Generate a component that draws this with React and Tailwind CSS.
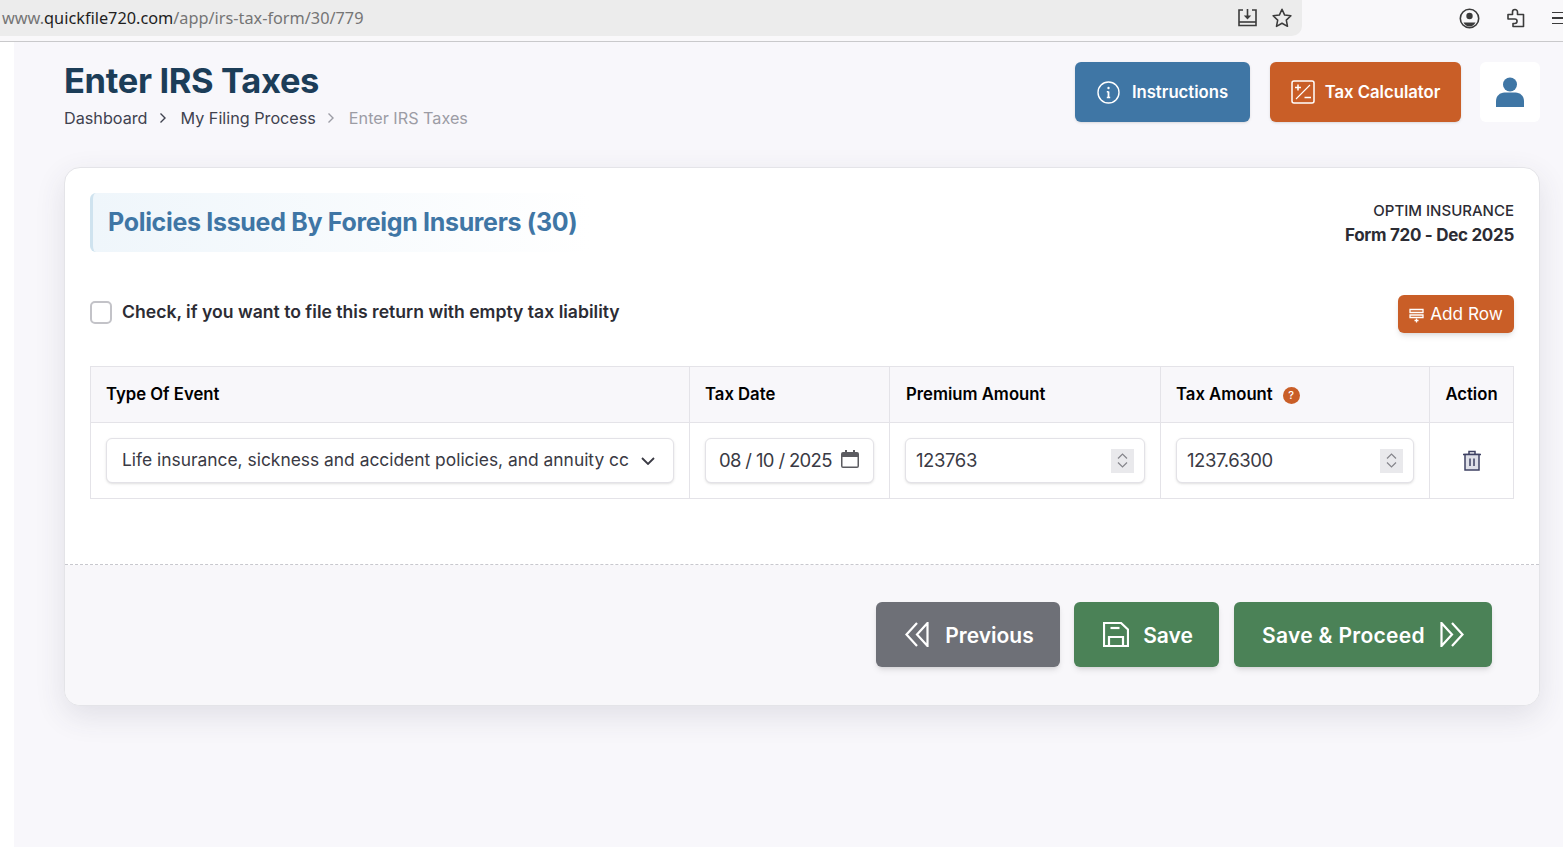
import React from "react";

const font = { fontFamily: "Inter, 'Liberation Sans', sans-serif" };

function Spinner() {
  return (
    <span className="flex h-[24px] w-[23px] flex-col items-center justify-center gap-[3px] bg-[#e9e9ec]">
      <svg width="11" height="6" viewBox="0 0 11 6" fill="none" stroke="#85858b" strokeWidth="1.2">
        <path d="M1 5.5 5.5 1 10 5.5" />
      </svg>
      <svg width="11" height="6" viewBox="0 0 11 6" fill="none" stroke="#85858b" strokeWidth="1.2">
        <path d="M1 .5 5.5 5 10 .5" />
      </svg>
    </span>
  );
}

function Crumb() {
  return (
    <svg width="8" height="12" viewBox="0 0 8 12" fill="none" stroke="currentColor" strokeWidth="1.4">
      <path d="M1.5 1.5 6 6l-4.5 4.500" />
    </svg>
  );
}

function BrowserBar() {
  return (
    <div className="flex h-[42px] items-start justify-between border-b border-[#c9c9cb] bg-[#f9f8fa]">
      <div className="flex h-[36px] w-[1302px] items-center justify-between rounded-br-[10px] bg-[#ececec] pl-[2px] pr-[9px]">
        <div className="text-[16.3px] text-[#757575]" style={{ fontFamily: "'Noto Sans', sans-serif" }}>
          www.<span className="text-[#1e1e1e]">quickfile720.com</span>/app/irs-tax-form/30/779
        </div>
        <div className="flex items-center gap-[13px] text-[#3b3b3b]">
          <svg width="21" height="20" viewBox="0 0 21 20" fill="none" stroke="currentColor" strokeWidth="1.6">
            <path d="M6 2H2v15.500h17V2h-4" />
            <path d="M2 14h17" />
            <path d="M10.500 1v9" />
            <path d="M6.800 7.500h7.400l-3.700 4z" fill="currentColor" stroke="none" />
          </svg>
          <svg width="22" height="22" viewBox="0 0 24 24" fill="none" stroke="currentColor" strokeWidth="1.700" strokeLinejoin="round">
            <path d="m12 2.500 2.900 6.300 6.800.8-5 4.700 1.300 6.800-6-3.400-6 3.400 1.300-6.800-5-4.700 6.800-.8z" />
          </svg>
        </div>
      </div>
      <div className="flex h-[36px] flex-1 items-center justify-end gap-[27px] text-[#3b3b3b]">
        <svg width="21" height="21" viewBox="0 0 21 21" fill="none" stroke="currentColor" strokeWidth="1.6">
          <circle cx="10.500" cy="10.500" r="9.200" />
          <circle cx="10.500" cy="8" r="3.200" fill="currentColor" stroke="none" />
          <path d="M4.500 14.500h12c-1.300 2.400-3.500 4-6 4s-4.700-1.600-6-4z" fill="currentColor" stroke="none" />
        </svg>
        <svg width="18" height="20" viewBox="0 0 18 20" fill="none" stroke="currentColor" strokeWidth="1.6" strokeLinejoin="round">
          <path d="M1 6.500h4.500V4a2.500 2.500 0 0 1 5 0v2.500H16.500V18.500H6v-3h1.800a2.200 2.200 0 0 0 0-4.500H1z" />
        </svg>
        <div className="flex w-[11px] flex-col gap-[4px]">
          <span className="h-[1.500px] bg-[#3b3b3b]" />
          <span className="h-[1.500px] bg-[#3b3b3b]" />
          <span className="h-[1.500px] bg-[#3b3b3b]" />
        </div>
      </div>
    </div>
  );
}

function PageHeader() {
  return (
    <div className="flex items-start justify-between">
      <div>
        <h1 className="mt-[-1px] text-[34.500px] font-bold leading-[40px] tracking-[-0.35px] text-[#1c3d58]">Enter IRS Taxes</h1>
        <div className="mt-[7px] flex items-center text-[16.200px] leading-[20px]">
          <span className="text-[#40424f]">Dashboard</span>
          <span className="ml-[11px] mr-[14px] text-[#40424f]"><Crumb /></span>
          <span className="text-[#40424f]">My Filing Process</span>
          <span className="ml-[11px] mr-[14px] text-[#9c9ca5]"><Crumb /></span>
          <span className="text-[#9c9ca5]">Enter IRS Taxes</span>
        </div>
      </div>
      <div className="flex items-center">
        <button className="flex h-[60px] w-[175px] items-center justify-center gap-[12px] rounded-[6px] bg-[#3f76a5] text-[16.700px] font-semibold text-white shadow-sm">
          <svg width="23" height="23" viewBox="0 0 23 23" fill="none" stroke="currentColor" strokeWidth="1.4">
            <circle cx="11.500" cy="11.500" r="10.500" />
            <path d="M11.500 10.500v6" strokeWidth="1.800" />
            <path d="M9.800 10.700h1.700M9.800 16.500h3.400" />
            <circle cx="11.500" cy="7" r="1.200" fill="currentColor" stroke="none" />
          </svg>
          <span className="mt-[1px]">Instructions</span>
        </button>
        <button className="ml-[20px] flex h-[60px] w-[191px] items-center justify-center gap-[10px] rounded-[6px] bg-[#c95e27] text-[16.700px] font-semibold text-white shadow-sm">
          <svg width="24" height="24" viewBox="0 0 24 24" fill="none" stroke="currentColor" strokeWidth="1.500">
            <rect x="1" y="1" width="22" height="22" rx="2" />
            <path d="M19 5 5 19" strokeWidth="1.100" />
            <path d="M4 7.500h6M7 4.500v6M13.500 17.500h6.500" />
          </svg>
          <span className="mt-[1px]">Tax Calculator</span>
        </button>
        <div className="ml-[19px] flex h-[60px] w-[60px] items-center justify-center rounded-[6px] bg-white">
          <svg width="28" height="30" viewBox="0 0 28 30" fill="#3f76a5">
            <circle cx="14" cy="7.500" r="7" />
            <path d="M0 30v-6c0-5 4-8.500 8.500-8.500h11c4.500 0 8.500 3.500 8.500 8.500v6z" />
          </svg>
        </div>
      </div>
    </div>
  );
}

function NumberField({ value }) {
  return (
    <div className="flex h-[45px] items-center justify-between rounded-[6px] border border-[#e3e2e7] bg-white pl-[10px] pr-[10px] text-[18.500px] tracking-[-0.4px] text-[#3a3a44] shadow-sm">
      {value}
      <Spinner />
    </div>
  );
}

function PolicyTable() {
  return (
    <div className="mt-[33px] border border-[#e4e3e8]">
      <div className="grid h-[55px] grid-cols-[598px_200px_271px_269px_1fr] bg-[#f8f7fa] text-[16.700px] font-semibold text-black">
        <div className="flex items-center pl-[15px]">Type Of Event</div>
        <div className="flex items-center border-l border-[#e4e3e8] pl-[15px]">Tax Date</div>
        <div className="flex items-center border-l border-[#e4e3e8] pl-[16px]">Premium Amount</div>
        <div className="flex items-center gap-[10px] border-l border-[#e4e3e8] pl-[15px]">
          Tax Amount
          <span className="mt-[2px] flex h-[17px] w-[17px] items-center justify-center rounded-full bg-[#c95e27] text-[11px] font-medium text-white">?</span>
        </div>
        <div className="flex items-center justify-center border-l border-[#e4e3e8]">Action</div>
      </div>
      <div className="grid h-[76px] grid-cols-[598px_200px_271px_269px_1fr] border-t border-[#e4e3e8]">
        <div className="flex items-center pl-[15px] pr-[15px]">
          <div className="flex h-[45px] w-full items-center justify-between rounded-[6px] border border-[#e3e2e7] bg-white pl-[15px] pr-[18px] text-[17.400px] text-[#3a3a44] shadow-sm">
            <span className="whitespace-nowrap">Life insurance, sickness and accident policies, and annuity cc</span>
            <svg width="14" height="8" viewBox="0 0 14 8" fill="none" stroke="#3a3a44" strokeWidth="1.800">
              <path d="m1 1 6 6 6-6" />
            </svg>
          </div>
        </div>
        <div className="flex items-center border-l border-[#e4e3e8] pl-[15px] pr-[15px]">
          <div className="flex h-[45px] w-full items-center justify-between whitespace-nowrap rounded-[6px] border border-[#e3e2e7] bg-white pl-[13px] pr-[14px] text-[18.500px] tracking-[-0.65px] text-[#3a3a44] shadow-sm">
            08 / 10 / 2025
            <svg width="18" height="18" viewBox="0 0 18 18" fill="#5b5b60" className="mb-[3px] shrink-0">
              <path d="M4 0h2v2h6V0h2v2h2a2 2 0 0 1 2 2v12a2 2 0 0 1-2 2H2a2 2 0 0 1-2-2V4a2 2 0 0 1 2-2h2zM1.500 7v9a.5.5 0 0 0 .5.5h14a.5.5 0 0 0 .5-.5V7z" />
            </svg>
          </div>
        </div>
        <div className="flex flex-col justify-center border-l border-[#e4e3e8] pl-[15px] pr-[15px]">
          <NumberField value="123763" />
        </div>
        <div className="flex flex-col justify-center border-l border-[#e4e3e8] pl-[15px] pr-[15px]">
          <NumberField value="1237.6300" />
        </div>
        <div className="flex items-center justify-center border-l border-[#e4e3e8]">
          <svg width="18" height="21" viewBox="0 0 18 21" fill="none" stroke="#3f4263" strokeWidth="1.500">
            <path d="M0 4.500h18M6 4.500V1.500h6v3" />
            <path d="M2 4.500h14V20H2z" fill="#dfe0e8" />
            <path d="M7 8.500v7.500M11 8.500v7.500" />
          </svg>
        </div>
      </div>
    </div>
  );
}

function FooterButton({ className, children }) {
  return (
    <button className={`flex h-[65px] items-center justify-center rounded-[6px] text-[21px] font-semibold text-white shadow-md ${className}`}>
      {children}
    </button>
  );
}

export default function App() {
  return (
    <div className="min-h-[847px] overflow-hidden bg-[#f9f8fb]" style={font}>
      <BrowserBar />
      <div className="flex">
        <div className="w-[14px] shrink-0 self-stretch bg-white" />
        <div className="h-[805px] flex-1 bg-[#f8f7fb] pl-[50px] pr-[23px] pt-[20px]">
          <PageHeader />
          <div className="mt-[39px] overflow-hidden rounded-[16px] border border-[#e4e4e8] bg-white shadow-[0_10px_30px_rgba(60,60,80,0.12)]">
            <div className="h-[397px] border-b border-dashed border-[#c8c8ce] px-[25px] pt-[25px]">
              <div className="flex items-start justify-between">
                <div className="flex h-[59px] w-[500px] items-center rounded-[6px] border-l-[3px] border-[#cfe3ef] bg-gradient-to-r from-[#eff6fb] to-white pl-[15px] text-[25px] font-bold tracking-[-0.32px] text-[#3f76a5]">
                  Policies Issued By Foreign Insurers (30)
                </div>
                <div className="mt-[8px] text-right text-[#2c2c34]">
                  <div className="text-[15px] font-medium leading-[20px]">OPTIM INSURANCE</div>
                  <div className="mt-[2px] text-[17px] font-bold leading-[24px] tracking-[-0.3px]">Form 720 - Dec 2025</div>
                </div>
              </div>
              <div className="mt-[43px] flex items-start justify-between">
                <label className="mt-[6px] flex items-center gap-[10px] text-[17.600px] font-semibold leading-[22px] text-[#2c2c34]">
                  <span className="h-[23px] w-[22px] rounded-[5px] border-2 border-[#c3c3c8] bg-white" />
                  <span className="mt-[-2px]">Check, if you want to file this return with empty tax liability</span>
                </label>
                <button className="flex h-[38px] w-[116px] items-center justify-center gap-[6px] rounded-[6px] bg-[#c95e27] text-[17.200px] text-white shadow-md">
                  <svg width="15" height="15" viewBox="0 0 15 15" fill="none" stroke="currentColor" strokeWidth="1.300" className="mt-[3px]">
                    <path d="M1 1.500h13v3H1zM1 7h13v2.500H1z" />
                    <path d="M7.500 10.500v4M5.500 12.500h4" />
                  </svg>
                  Add Row
                </button>
              </div>
              <PolicyTable />
            </div>
            <div className="flex h-[140px] items-start justify-end gap-[15px] bg-[#f8f7fa] pr-[47px] pt-[37px]">
              <FooterButton className="mr-[-1px] w-[184px] gap-[16px] bg-[#6e7077] pl-[3px]">
                <svg width="24" height="25" viewBox="0 0 24 25" fill="none" stroke="currentColor" strokeWidth="2.200">
                  <path d="M12 1 1.500 12.500 12 24" />
                  <path d="M22.500 1v23L12 12.500z" />
                </svg>
                <span className="mt-[2px]">Previous</span>
              </FooterButton>
              <FooterButton className="w-[145px] gap-[14px] bg-[#4b8257] pl-[3px]">
                <svg width="26" height="25" viewBox="0 0 26 25" fill="none" stroke="currentColor" strokeWidth="2.200">
                  <path d="M1 1h17l7 6.500V24H1z" />
                  <path d="M7.500 6h9" />
                  <path d="M6 24v-9h14v9" />
                </svg>
                <span className="mt-[2px]">Save</span>
              </FooterButton>
              <FooterButton className="w-[258px] gap-[15px] bg-[#4b8257]">
                <span className="mt-[2px] tracking-[0.3px]">Save &amp; Proceed</span>
                <svg width="24" height="25" viewBox="0 0 24 25" fill="none" stroke="currentColor" strokeWidth="2.200">
                  <path d="M1.500 1v23L12 12.500z" />
                  <path d="M12 1 22.500 12.500 12 24" />
                </svg>
              </FooterButton>
            </div>
          </div>
        </div>
      </div>
    </div>
  );
}
